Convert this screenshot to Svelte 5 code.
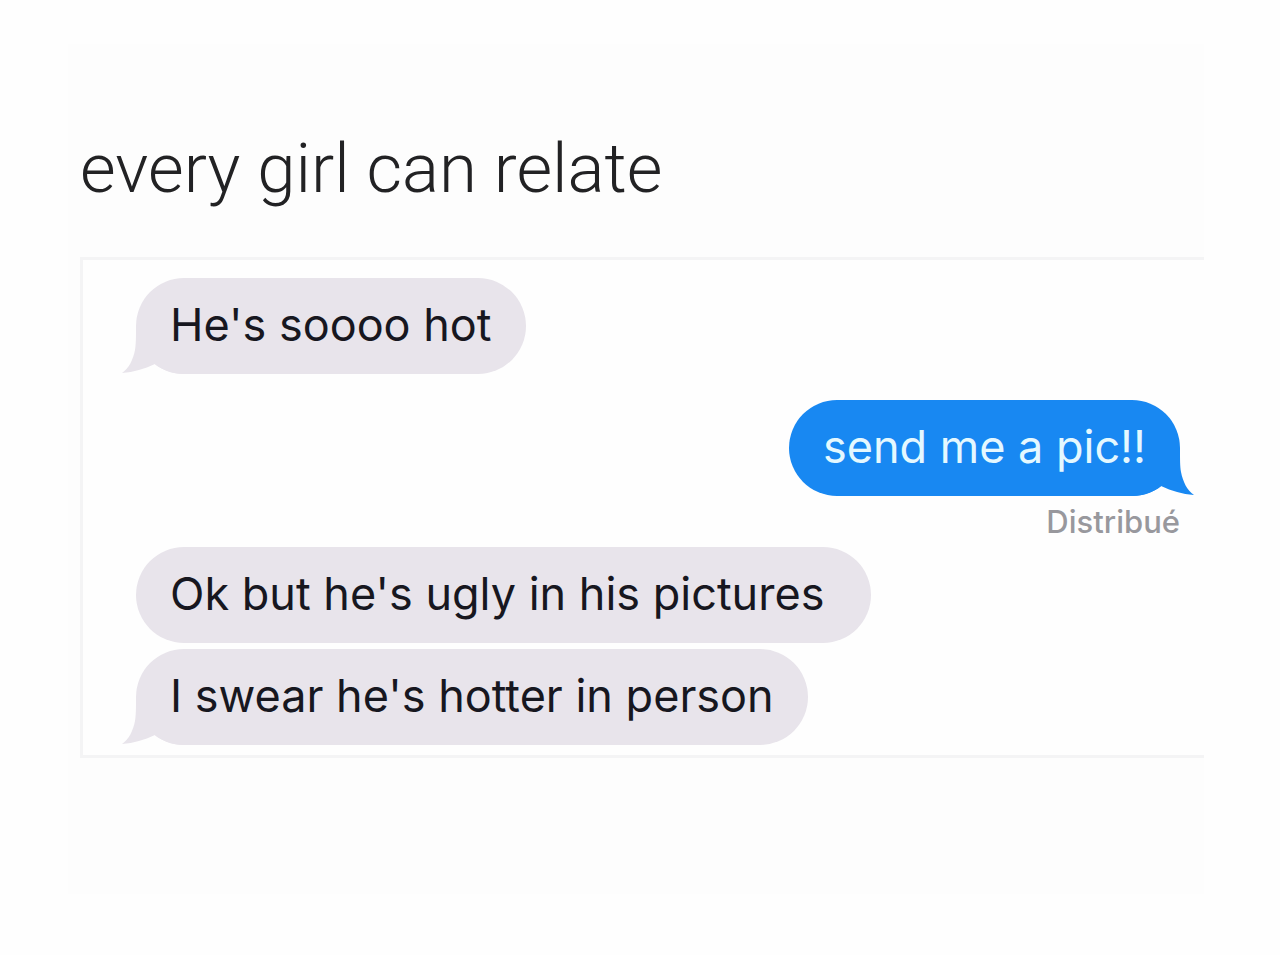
<script lang="ts">
  interface Message {
    text: string;
    sent: boolean;
    tail: boolean;
    status?: string;
  }

  const title = 'every girl can relate';

  // Consecutive messages from the same person share a group
  const groups: Message[][] = [
    [{ text: "He's soooo hot", sent: false, tail: true }],
    [{ text: 'send me a pic!!', sent: true, tail: true, status: 'Distribué' }],
    [
      { text: "Ok but he's ugly in his pictures ", sent: false, tail: false },
      { text: "I swear he's hotter in person", sent: false, tail: true }
    ]
  ];
</script>

<main class="post">
  <h1 class="title">{title}</h1>

  <section class="chat" aria-label="Conversation">
    {#each groups as group}
      <div class="group" class:sent={group[0].sent}>
        {#each group as message}
          <div class="bubble">
            <p class="text">{message.text}</p>
            {#if message.tail}
              <svg class="tail" viewBox="0 0 62 48" aria-hidden="true">
                <path d="M14 0C14 12 14 18 13 24C11 34 7 42 0 47C12 46 22 43 33 38C40 44 50 48 62 48V0Z" />
              </svg>
            {/if}
          </div>
          {#if message.status}
            <span class="status">{message.status}</span>
          {/if}
        {/each}
      </div>
    {/each}
  </section>
</main>

<style>
  :global(body) {
    margin: 0;
    background: #fefefe;
  }

  .post {
    margin: 44px 76px 0 68px;
    padding: 77px 0 136px 12px;
    background: #fdfdfd;
    font-family: Inter, 'Liberation Sans', sans-serif;
  }

  .title {
    margin: 0 0 40px;
    color: #222224;
    font-family: Roboto, Inter, sans-serif;
    font-size: 69px;
    font-weight: 300;
    line-height: 96px;
  }

  .chat {
    display: flex;
    flex-direction: column;
    padding: 18px 24px 10px 53px;
    border: 3px solid #f4f4f5;
    border-right: 0;
    background: #fefefe;
  }

  .group {
    display: flex;
    flex-direction: column;
    align-items: flex-start;
    gap: 6px;
  }

  .group + .group {
    margin-top: 26px;
  }

  .group.sent {
    align-items: flex-end;
  }

  .group.sent + .group {
    margin-top: 5px;
  }

  .bubble {
    position: relative;
    z-index: 0;
    padding: 19px 34px 21px;
    border-radius: 48px;
    background: #e8e4eb;
    color: #17171f;
  }

  .text {
    margin: 0;
    font-size: 45px;
    line-height: 56px;
    white-space: break-spaces;
  }

  .sent .bubble {
    background: #1888f2;
    color: #e4f8ff;
  }

  .tail {
    position: absolute;
    bottom: 0;
    left: -14px;
    z-index: -1;
    width: 62px;
    height: 48px;
    fill: #e8e4eb;
  }

  .sent .tail {
    right: -14px;
    left: auto;
    fill: #1888f2;
    transform: scaleX(-1);
  }

  .status {
    color: #98989d;
    font-size: 31px;
    font-weight: 500;
    line-height: 40px;
  }
</style>
